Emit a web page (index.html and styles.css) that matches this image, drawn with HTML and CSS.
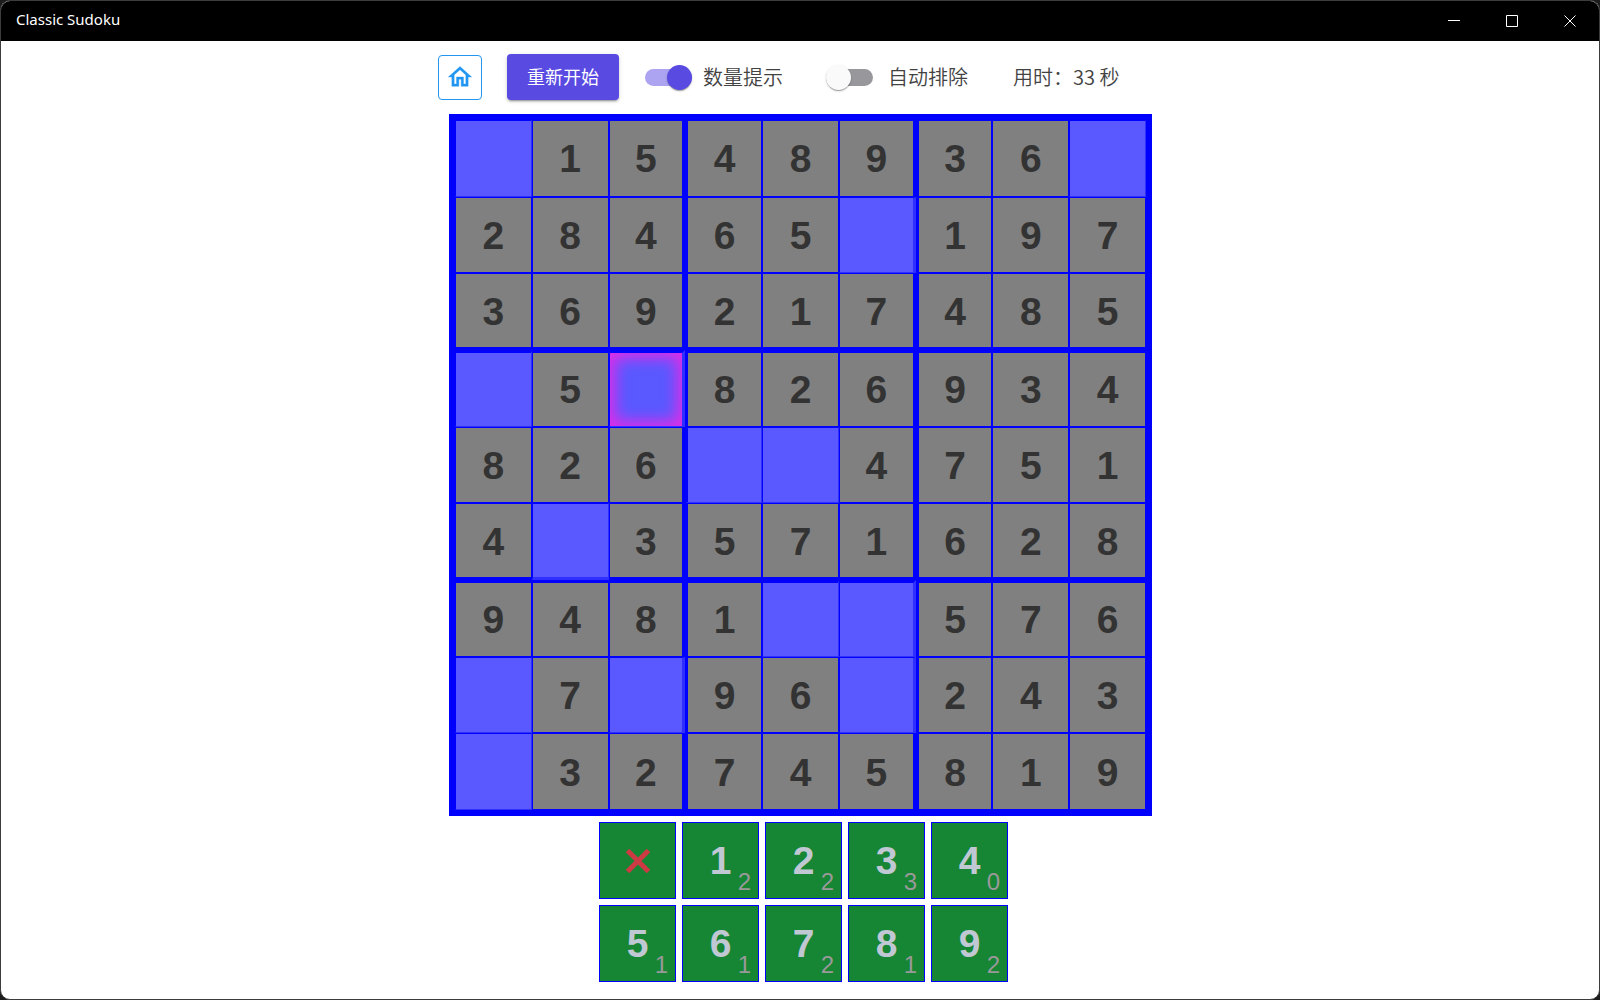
FILE: index.html
```html
<!DOCTYPE html>
<html lang="zh-CN">
<head>
<meta charset="utf-8">
<meta name="viewport" content="width=device-width, initial-scale=1">
<title>Classic Sudoku</title>
<link rel="stylesheet" href="styles.css">
</head>
<body>
<div class="window">
  <header class="titlebar">
    <span class="titlebar-name">Classic Sudoku</span>
    <div class="titlebar-controls">
      <button class="caption" type="button" aria-label="Minimize"><svg width="12" height="12" viewBox="0 0 12 12"><path d="M0 5.5h12"/></svg></button>
      <button class="caption" type="button" aria-label="Maximize"><svg width="12" height="12" viewBox="0 0 12 12"><path d="M.5.5h11v11H.5z"/></svg></button>
      <button class="caption" type="button" aria-label="Close"><svg width="12" height="12" viewBox="0 0 12 12"><path d="M.5.5l11 11M11.5.5l-11 11"/></svg></button>
    </div>
  </header>
  <main class="game">
    <div class="toolbar">
      <a class="home" href="#" aria-label="Home"><svg width="28" height="28" viewBox="0 0 24 24"><path d="M12 5.69l5 4.5V18h-2v-6H9v6H7v-7.81l5-4.5M12 3L2 12h3v8h6v-6h2v6h6v-8h3L12 3z"/></svg></a>
      <button class="restart" type="button">重新开始</button>
      <label class="switch switch-hint"><input class="switch-input" type="checkbox" checked><span>数量提示</span></label>
      <label class="switch switch-auto"><input class="switch-input" type="checkbox"><span>自动排除</span></label>
      <span class="timer">用时：33 秒</span>
    </div>
    <div class="board">
      <button class="cell blank" type="button" aria-label="Empty"></button><div class="cell">1</div><div class="cell">5</div><div class="cell">4</div><div class="cell">8</div><div class="cell">9</div><div class="cell">3</div><div class="cell">6</div><button class="cell blank" type="button" aria-label="Empty"></button>
      <div class="cell">2</div><div class="cell">8</div><div class="cell">4</div><div class="cell">6</div><div class="cell">5</div><button class="cell blank" type="button" aria-label="Empty"></button><div class="cell">1</div><div class="cell">9</div><div class="cell">7</div>
      <div class="cell">3</div><div class="cell">6</div><div class="cell">9</div><div class="cell">2</div><div class="cell">1</div><div class="cell">7</div><div class="cell">4</div><div class="cell">8</div><div class="cell">5</div>
      <button class="cell blank" type="button" aria-label="Empty"></button><div class="cell">5</div><button class="cell blank selected" type="button" aria-label="Empty, selected"></button><div class="cell">8</div><div class="cell">2</div><div class="cell">6</div><div class="cell">9</div><div class="cell">3</div><div class="cell">4</div>
      <div class="cell">8</div><div class="cell">2</div><div class="cell">6</div><button class="cell blank" type="button" aria-label="Empty"></button><button class="cell blank" type="button" aria-label="Empty"></button><div class="cell">4</div><div class="cell">7</div><div class="cell">5</div><div class="cell">1</div>
      <div class="cell">4</div><button class="cell blank" type="button" aria-label="Empty"></button><div class="cell">3</div><div class="cell">5</div><div class="cell">7</div><div class="cell">1</div><div class="cell">6</div><div class="cell">2</div><div class="cell">8</div>
      <div class="cell">9</div><div class="cell">4</div><div class="cell">8</div><div class="cell">1</div><button class="cell blank" type="button" aria-label="Empty"></button><button class="cell blank" type="button" aria-label="Empty"></button><div class="cell">5</div><div class="cell">7</div><div class="cell">6</div>
      <button class="cell blank" type="button" aria-label="Empty"></button><div class="cell">7</div><button class="cell blank" type="button" aria-label="Empty"></button><div class="cell">9</div><div class="cell">6</div><button class="cell blank" type="button" aria-label="Empty"></button><div class="cell">2</div><div class="cell">4</div><div class="cell">3</div>
      <button class="cell blank" type="button" aria-label="Empty"></button><div class="cell">3</div><div class="cell">2</div><div class="cell">7</div><div class="cell">4</div><div class="cell">5</div><div class="cell">8</div><div class="cell">1</div><div class="cell">9</div>
    </div>
    <div class="keypad">
      <button class="key" type="button" aria-label="Clear"><svg class="key-clear" width="26" height="26" viewBox="0 0 26 26"><path d="M2.500 2.500l21 21M23.500 2.500l-21 21"/></svg></button>
      <button class="key" type="button">1<span class="count">2</span></button>
      <button class="key" type="button">2<span class="count">2</span></button>
      <button class="key" type="button">3<span class="count">3</span></button>
      <button class="key" type="button">4<span class="count">0</span></button>
      <button class="key" type="button">5<span class="count">1</span></button>
      <button class="key" type="button">6<span class="count">1</span></button>
      <button class="key" type="button">7<span class="count">2</span></button>
      <button class="key" type="button">8<span class="count">1</span></button>
      <button class="key" type="button">9<span class="count">2</span></button>
    </div>
  </main>
</div>
</body>
</html>
```
FILE: styles.css
```css
* {
  box-sizing: border-box;
}

body {
  margin: 0;
  background: #1c1c1c;
  color: #424242;
  font-family: "Noto Sans CJK SC", sans-serif;
}

button {
  margin: 0;
  padding: 0;
  font-family: inherit;
}

.window {
  min-height: 100vh;
  border: 1px solid #3c3c3c;
  border-radius: 10px;
  background: #fff;
  overflow: hidden;
}

.titlebar {
  display: flex;
  justify-content: space-between;
  height: 40px;
  padding-left: 15px;
  background: #000;
  color: #fff;
}

.titlebar-name {
  font-family: "Noto Sans", sans-serif;
  font-size: 15px;
  line-height: 36px;
}

.titlebar-controls {
  display: flex;
}

.caption {
  display: grid;
  place-items: center;
  width: 58px;
  border: 0;
  background: none;
}

.caption svg {
  fill: none;
  stroke: #fff;
}

.game {
  display: flex;
  flex-direction: column;
  align-items: center;
  padding-left: 1px;
}

.toolbar {
  display: flex;
  align-items: center;
  width: 100%;
  max-width: 725px;
  height: 73px;
  padding-bottom: 1px;
  font-size: 20px;
  font-weight: 350;
  line-height: 30px;
}

.home {
  display: grid;
  place-items: center;
  width: 44px;
  height: 45px;
  border: 1px solid #2196f3;
  border-radius: 4px;
}

.home svg {
  fill: #2196f3;
  stroke: #2196f3;
  stroke-width: .3;
}

.restart {
  width: 112px;
  height: 46px;
  margin-left: 25px;
  padding-bottom: 3px;
  border: 0;
  border-radius: 4px;
  background: #594ae2;
  box-shadow: 0 3px 1px -2px rgba(0, 0, 0, .2), 0 2px 2px rgba(0, 0, 0, .14), 0 1px 5px rgba(0, 0, 0, .12);
  color: #fff;
  font-size: 18px;
}

.switch {
  display: flex;
  align-items: center;
  gap: 11px;
}

.switch-hint {
  margin-left: 26px;
}

.switch-auto {
  gap: 15px;
  margin-left: 43px;
}

.switch-input {
  appearance: none;
  display: flex;
  align-items: center;
  width: 47px;
  height: 17px;
  margin: 0;
  border-radius: 9px;
  background: #98989c;
}

.switch-input::before {
  content: "";
  width: 25px;
  height: 25px;
  border-radius: 50%;
  background: #fafafa;
  box-shadow: 0 2px 1px -1px rgba(0, 0, 0, .2), 0 1px 1px rgba(0, 0, 0, .14), 0 1px 3px rgba(0, 0, 0, .12);
}

.switch-input:checked {
  justify-content: flex-end;
  background: #aca4f0;
}

.switch-input:checked::before {
  background: #594ae2;
}

.timer {
  margin-left: 45px;
}

.board {
  display: grid;
  grid-template-columns: repeat(9, 1fr);
  grid-template-rows: repeat(9, 1fr);
  width: 100%;
  max-width: 703px;
  aspect-ratio: 703 / 702;
  border: 6px solid #00f;
  background: #00f;
}

.cell {
  display: grid;
  place-items: center;
  min-width: 0;
  min-height: 0;
  padding-top: 2px;
  border: 1px solid #00f;
  background: #808080;
  color: #333;
  font: bold 39px "Liberation Sans", Arial, sans-serif;
}

/* Heavy lines between the 3x3 boxes */
.cell:nth-child(9n + 3),
.cell:nth-child(9n + 6) {
  border-right-width: 3px;
}

.cell:nth-child(9n + 4),
.cell:nth-child(9n + 7) {
  border-left-width: 3px;
}

.cell:nth-child(n + 19):nth-child(-n + 27),
.cell:nth-child(n + 46):nth-child(-n + 54) {
  border-bottom-width: 3px;
}

.cell:nth-child(n + 28):nth-child(-n + 36),
.cell:nth-child(n + 55):nth-child(-n + 63) {
  border-top-width: 3px;
}

.blank {
  border-right-color: #2f2fff;
  border-bottom-color: #2f2fff;
  border-radius: 0;
  background: #5959ff;
}

.selected {
  box-shadow: inset 0 0 15px 5px #e22be8;
}

.keypad {
  display: grid;
  grid-template-columns: repeat(5, 77px);
  grid-auto-rows: 77px;
  gap: 6px;
  padding: 6px 0 16px 6px;
}

.key {
  display: grid;
  place-items: center;
  position: relative;
  border: 1px solid #00f;
  background: #168534;
  color: #c0c8d4;
  font: bold 39px "Liberation Sans", Arial, sans-serif;
}

.key-clear {
  fill: none;
  stroke: #cc3a44;
  stroke-width: 5;
}

.count {
  position: absolute;
  right: 7px;
  bottom: 2px;
  color: #999;
  font-size: 24px;
  font-weight: normal;
}
```
